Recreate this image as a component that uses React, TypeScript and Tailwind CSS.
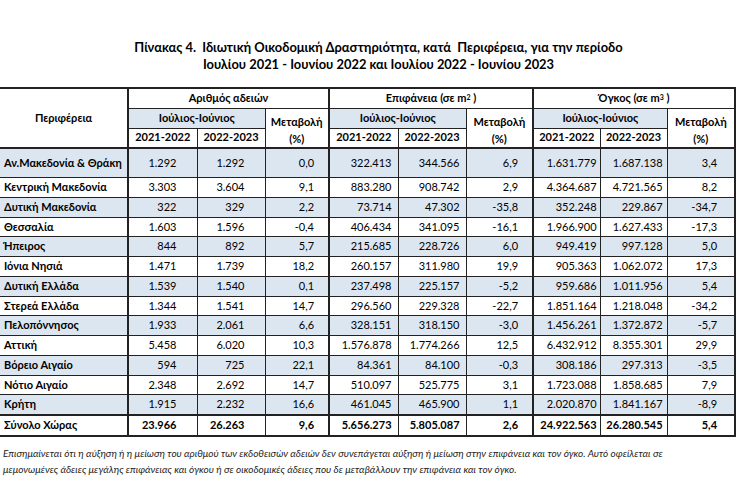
import React from "react";

type Row = { name: string; v: string[]; total?: boolean };

const rows: Row[] = [
  { name: "Αν.Μακεδονία & Θράκη", v: ["1.292", "1.292", "0,0", "322.413", "344.566", "6,9", "1.631.779", "1.687.138", "3,4"] },
  { name: "Κεντρική Μακεδονία", v: ["3.303", "3.604", "9,1", "883.280", "908.742", "2,9", "4.364.687", "4.721.565", "8,2"] },
  { name: "Δυτική Μακεδονία", v: ["322", "329", "2,2", "73.714", "47.302", "-35,8", "352.248", "229.867", "-34,7"] },
  { name: "Θεσσαλία", v: ["1.603", "1.596", "-0,4", "406.434", "341.095", "-16,1", "1.966.900", "1.627.433", "-17,3"] },
  { name: "Ήπειρος", v: ["844", "892", "5,7", "215.685", "228.726", "6,0", "949.419", "997.128", "5,0"] },
  { name: "Ιόνια Νησιά", v: ["1.471", "1.739", "18,2", "260.157", "311.980", "19,9", "905.363", "1.062.072", "17,3"] },
  { name: "Δυτική Ελλάδα", v: ["1.539", "1.540", "0,1", "237.498", "225.157", "-5,2", "959.686", "1.011.956", "5,4"] },
  { name: "Στερεά Ελλάδα", v: ["1.344", "1.541", "14,7", "296.560", "229.328", "-22,7", "1.851.164", "1.218.048", "-34,2"] },
  { name: "Πελοπόννησος", v: ["1.933", "2.061", "6,6", "328.151", "318.150", "-3,0", "1.456.261", "1.372.872", "-5,7"] },
  { name: "Αττική", v: ["5.458", "6.020", "10,3", "1.576.878", "1.774.266", "12,5", "6.432.912", "8.355.301", "29,9"] },
  { name: "Βόρειο Αιγαίο", v: ["594", "725", "22,1", "84.361", "84.100", "-0,3", "308.186", "297.313", "-3,5"] },
  { name: "Νότιο Αιγαίο", v: ["2.348", "2.692", "14,7", "510.097", "525.775", "3,1", "1.723.088", "1.858.685", "7,9"] },
  { name: "Κρήτη", v: ["1.915", "2.232", "16,6", "461.045", "465.900", "1,1", "2.020.870", "1.841.167", "-8,9"] },
  { name: "Σύνολο Χώρας", v: ["23.966", "26.263", "9,6", "5.656.273", "5.805.087", "2,6", "24.922.563", "26.280.545", "5,4"], total: true },
];

const padR = ["pr-[20px]", "pr-[20px]", "pr-[14px]", "pr-[6px]", "pr-[6px]", "pr-[14px]", "pr-[3px]", "pr-[4px]", "pr-[17px]"];
const thickL = [true, false, false, true, false, false, true, false, false];

export default function App() {
  return (
    <div className="w-[755px] h-[485px] bg-white text-black overflow-hidden" style={{ fontFamily: "Lato, 'Liberation Sans', sans-serif" }}>
      <div className="pt-[39px] text-center font-bold text-[12.9px] leading-[17px] pl-[2px]">
        <div>Πίνακας 4.&nbsp; Ιδιωτική Οικοδομική Δραστηριότητα, κατά&nbsp; Περιφέρεια, για την περίοδο</div>
        <div>Ιουλίου 2021 - Ιουνίου 2022 και Ιουλίου 2022 - Ιουνίου 2023</div>
      </div>
      <table className="mt-[14px] border-collapse table-fixed text-[11px] w-[735px]">
        <colgroup>
          <col className="w-[128px]" />
          <col className="w-[69px]" />
          <col className="w-[68px]" />
          <col className="w-[64px]" />
          <col className="w-[69px]" />
          <col className="w-[68px]" />
          <col className="w-[67px]" />
          <col className="w-[67px]" />
          <col className="w-[67px]" />
          <col className="w-[68px]" />
        </colgroup>
        <thead className="font-bold">
          <tr className="h-[20px]">
            <th rowSpan={3} className="border-2 border-l-0 border-[#222] bg-white font-bold align-middle text-center">Περιφέρεια</th>
            <th colSpan={3} className="border-2 border-b border-[#222] bg-white font-bold">Αριθμός αδειών</th>
            <th colSpan={3} className="border-2 border-b border-[#222] bg-white font-bold">
              Επιφάνεια (σε m<sup className="text-[7px] relative -top-[2px]">2</sup> )
            </th>
            <th colSpan={3} className="border-2 border-b border-[#222] bg-white font-bold">
              Όγκος (σε m<sup className="text-[7px] relative -top-[2px]">3</sup> )
            </th>
          </tr>
          <tr className="h-[20px]">
            <th colSpan={2} className="border border-l-2 border-[#222] bg-[#dce6f1] font-bold">Ιούλιος-Ιούνιος</th>
            <th rowSpan={2} className="border border-r-2 border-b-2 border-[#222] bg-white font-bold align-top pt-[4px] leading-[17px]">Μεταβολή<br />(%)</th>
            <th colSpan={2} className="border border-l-2 border-[#222] bg-[#dce6f1] font-bold">Ιούλιος-Ιούνιος</th>
            <th rowSpan={2} className="border border-r-2 border-b-2 border-[#222] bg-white font-bold align-top pt-[4px] leading-[17px]">Μεταβολή<br />(%)</th>
            <th colSpan={2} className="border border-l-2 border-[#222] bg-[#dce6f1] font-bold">Ιούλιος-Ιούνιος</th>
            <th rowSpan={2} className="border border-r-2 border-b-2 border-[#222] bg-white font-bold align-top pt-[4px] leading-[17px]">Μεταβολή<br />(%)</th>
          </tr>
          <tr className="h-[19px]">
            {[0, 1, 2].map((g) => (
              <React.Fragment key={g}>
                <th className="border border-l-2 border-b-2 border-[#222] bg-white font-bold">2021-2022</th>
                <th className="border border-b-2 border-[#222] bg-white font-bold">2022-2023</th>
              </React.Fragment>
            ))}
          </tr>
        </thead>
        <tbody>
          {rows.map((r, i) => {
            const bg = i % 2 === 0 ? "bg-[#dce6f1]" : "bg-white";
            const h = i === 0 ? "h-[30px]" : r.total ? "h-[21px]" : "h-[19.75px]";
            const tb = r.total ? "border-t-2 border-b-2" : "";
            return (
              <tr key={r.name} className={`${h} ${bg} ${r.total ? "font-bold" : ""}`}>
                <td className={`border border-l-0 border-[#222] font-bold text-left pl-[4px] whitespace-nowrap ${tb}`}>{r.name}</td>
                {r.v.map((x, j) => (
                  <td
                    key={j}
                    className={`border border-[#222] text-right whitespace-nowrap ${padR[j]} ${thickL[j] ? "border-l-2" : ""} ${j === 8 ? "border-r-2" : ""} ${tb}`}
                  >
                    {x}
                  </td>
                ))}
              </tr>
            );
          })}
        </tbody>
      </table>
      <div className="mt-[8px] pl-[3px] italic text-[10px] leading-[16px] text-[#222]">
        <div>Επισημαίνεται ότι η αύξηση ή η μείωση του αριθμού των εκδοθεισών αδειών δεν συνεπάγεται αύξηση ή μείωση στην επιφάνεια και τον όγκο. Αυτό οφείλεται σε</div>
        <div>μεμονωμένες άδειες μεγάλης επιφάνειας και όγκου ή σε οικοδομικές άδειες που δε μεταβάλλουν την επιφάνεια και τον όγκο.</div>
      </div>
    </div>
  );
}
